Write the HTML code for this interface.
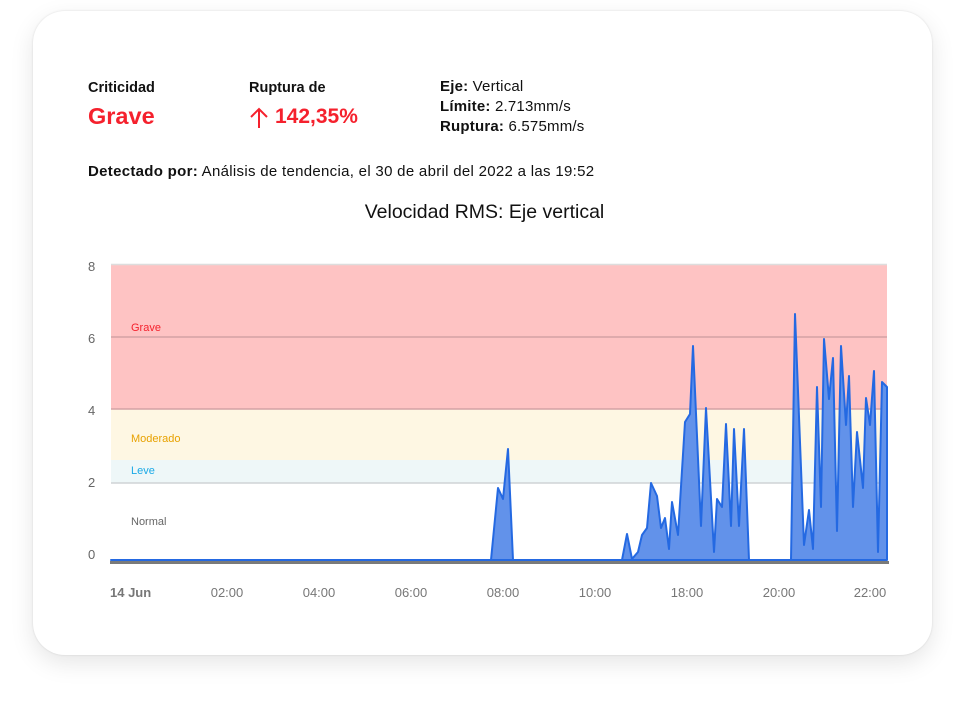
<!DOCTYPE html>
<html><head><style>
body{margin:0;width:965px;height:710px;background:#fff;position:relative;overflow:hidden;font-family:"Liberation Sans",sans-serif;}
.card{position:absolute;left:33px;top:11px;width:899px;height:644px;border-radius:32px;background:#fff;box-shadow:0 8px 24px rgba(0,0,0,0.10),0 0 2px rgba(0,0,0,0.12);}
.t{position:absolute;white-space:nowrap;color:#111;}
</style></head><body>
<div class="card"></div>
<div class="t" style="left:88px;top:80px;font-size:14.5px;font-weight:bold">Criticidad</div>
<div class="t" style="left:88px;top:103px;font-size:23.5px;font-weight:bold;color:#f5212d">Grave</div>
<div class="t" style="left:249px;top:80px;font-size:14.5px;font-weight:bold">Ruptura de</div>
<svg style="position:absolute;left:249px;top:107px" width="20" height="22"><path d="M10 2V21M2 10L10 2L18 10" fill="none" stroke="#f5212d" stroke-width="2"/></svg>
<div class="t" style="left:275px;top:105px;font-size:21px;font-weight:bold;color:#f5212d">142,35%</div>
<div class="t" style="left:440px;top:77px;font-size:15px;letter-spacing:0.2px;line-height:20px"><b>Eje:</b> Vertical<br><b>Límite:</b> 2.713mm/s<br><b>Ruptura:</b> 6.575mm/s</div>
<div class="t" style="left:88px;top:163px;font-size:15px;letter-spacing:0.3px"><b>Detectado por:</b> Análisis de tendencia, el 30 de abril del 2022 a las 19:52</div>
<div class="t" style="left:0;width:969px;text-align:center;top:201px;font-size:19.5px">Velocidad RMS: Eje vertical</div>
<svg width="965" height="710" style="position:absolute;left:0;top:0" font-family="Liberation Sans, sans-serif">
<rect x="111" y="264" width="776" height="145" fill="#fec3c3"/>
<rect x="111" y="409" width="776" height="51" fill="#fef7e3"/>
<rect x="111" y="460" width="776" height="23" fill="#eef7f8"/>
<line x1="111" y1="264.5" x2="887" y2="264.5" stroke="#ddd" stroke-width="1.5"/>
<line x1="111" y1="337" x2="887" y2="337" stroke="#d4a1a4" stroke-width="1.5"/>
<line x1="111" y1="409" x2="887" y2="409" stroke="#d4a1a4" stroke-width="1.5"/>
<line x1="111" y1="483" x2="887" y2="483" stroke="#cfd4d6" stroke-width="1.5"/>
<g font-size="11">
<text x="131" y="331" fill="#f5212d">Grave</text>
<text x="131" y="442" fill="#e8a200">Moderado</text>
<text x="131" y="474" fill="#1aa9e6">Leve</text>
<text x="131" y="525" fill="#666">Normal</text>
</g>
<g font-size="13" fill="#666">
<text x="88" y="271">8</text><text x="88" y="343">6</text><text x="88" y="415">4</text><text x="88" y="487">2</text><text x="88" y="559">0</text>
</g>
<polygon fill="#6292ea" stroke="#2469e2" stroke-width="2" stroke-linejoin="round" points="111,560 491,560 498,488 503,499 508,449 513,560 622,560 627,534 632,559 638,552 642,535 647,528 651,483 657,496 661,528 665,518 669,549 672,502 678,535 685,422 690,414 693,346 701,526 706,408 714,552 717,499 722,507 726,424 731,526 734,429 739,526 744,429 749,560 791,560 795,314 804,545 809,510 813,549 817,387 821,507 824,339 829,399 833,358 837,531 841,346 846,425 849,376 853,507 857,432 863,488 866,398 870,425 874,371 878,552 882,382 887,387 887,560"/>
<line x1="110" y1="562.5" x2="889" y2="562.5" stroke="#7a7a7a" stroke-width="3"/>
<g font-size="13" fill="#777">
<text x="110" y="597" font-weight="bold">14 Jun</text>
<text x="227" y="597" text-anchor="middle">02:00</text>
<text x="319" y="597" text-anchor="middle">04:00</text>
<text x="411" y="597" text-anchor="middle">06:00</text>
<text x="503" y="597" text-anchor="middle">08:00</text>
<text x="595" y="597" text-anchor="middle">10:00</text>
<text x="687" y="597" text-anchor="middle">18:00</text>
<text x="779" y="597" text-anchor="middle">20:00</text>
<text x="870" y="597" text-anchor="middle">22:00</text>
</g>
</svg>
</body></html>
